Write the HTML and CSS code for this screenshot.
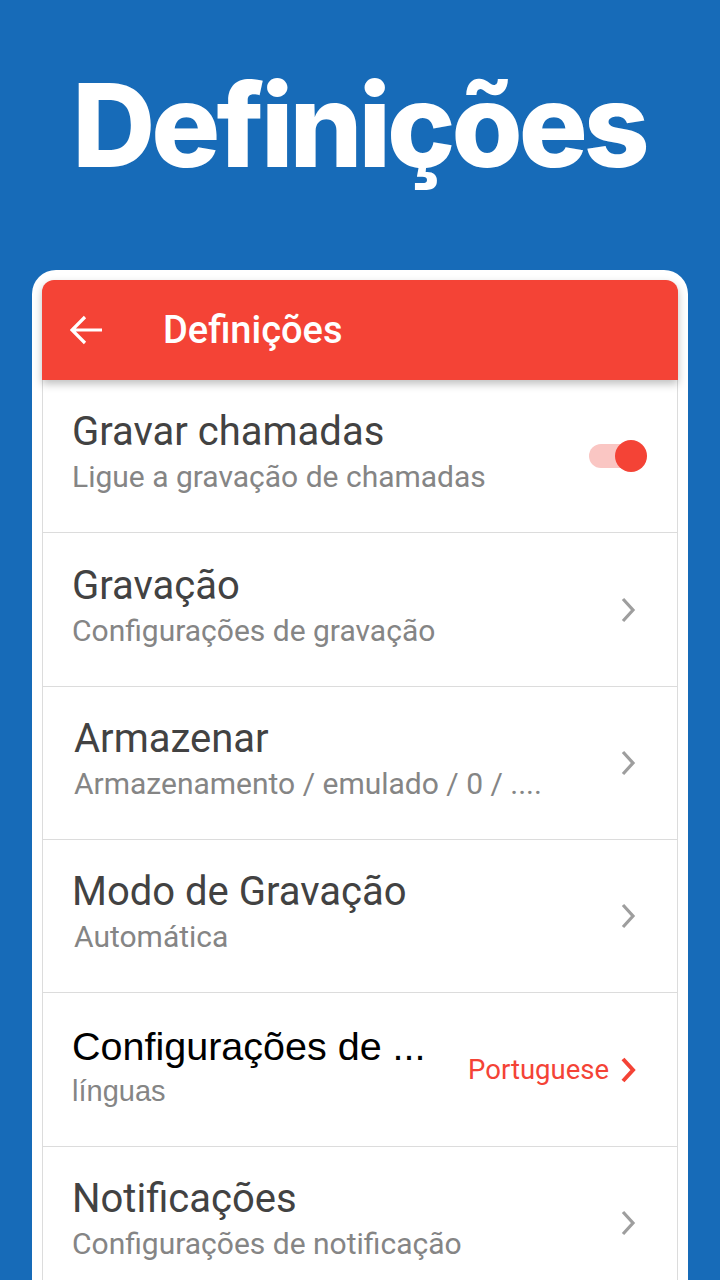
FILE: index.html
```html
<!DOCTYPE html>
<html lang="pt">
<head>
  <meta charset="UTF-8">
  <meta name="viewport" content="width=device-width, initial-scale=1.0">
  <title>Definições</title>
  <link rel="stylesheet" href="styles.css">
</head>
<body>
  <header class="hero">
    <h1>Definições</h1>
  </header>
  <main class="device">
    <div class="appbar">
      <svg class="back" width="34" height="30" viewBox="0 0 34 30">
        <path d="M2 15 H32 M15 2 L2 15 L15 28" fill="none" stroke="#fff" stroke-width="3.2"/>
      </svg>
      <h2>Definições</h2>
    </div>
    <ul class="settings">
      <li class="row">
        <div class="text">
          <p class="title">Gravar chamadas</p>
          <p class="sub">Ligue a gravação de chamadas</p>
        </div>
        <div class="switch"><span class="thumb"></span></div>
      </li>
      <li class="row tall">
        <div class="text">
          <p class="title">Gravação</p>
          <p class="sub">Configurações de gravação</p>
        </div>
        <svg class="chev" width="18" height="28" viewBox="0 0 18 28"><path d="M4 3 L14 14 L4 25" fill="none" stroke="#9e9e9e" stroke-width="3.2"/></svg>
      </li>
      <li class="row">
        <div class="text shift">
          <p class="title">Armazenar</p>
          <p class="sub">Armazenamento / emulado / 0 / ....</p>
        </div>
        <svg class="chev" width="18" height="28" viewBox="0 0 18 28"><path d="M4 3 L14 14 L4 25" fill="none" stroke="#9e9e9e" stroke-width="3.2"/></svg>
      </li>
      <li class="row">
        <div class="text">
          <p class="title">Modo de Gravação</p>
          <p class="sub shift">Automática</p>
        </div>
        <svg class="chev" width="18" height="28" viewBox="0 0 18 28"><path d="M4 3 L14 14 L4 25" fill="none" stroke="#9e9e9e" stroke-width="3.2"/></svg>
      </li>
      <li class="row tall">
        <div class="text">
          <p class="title lang">Configurações de ...</p>
          <p class="sub lang-sub">línguas</p>
        </div>
        <span class="value">Portuguese</span>
        <svg class="chev" width="18" height="28" viewBox="0 0 18 28"><path d="M4 3 L14 14 L4 25" fill="none" stroke="#f44336" stroke-width="4"/></svg>
      </li>
      <li class="row">
        <div class="text">
          <p class="title">Notificações</p>
          <p class="sub">Configurações de notificação</p>
        </div>
        <svg class="chev" width="18" height="28" viewBox="0 0 18 28"><path d="M4 3 L14 14 L4 25" fill="none" stroke="#9e9e9e" stroke-width="3.2"/></svg>
      </li>
    </ul>
  </main>
</body>
</html>
```

FILE: styles.css
```css
body {
  margin: 0;
  width: 720px;
  height: 1280px;
  overflow: hidden;
  background-color: #176bb8;
  font-family: Roboto, "Liberation Sans", sans-serif;
}

.hero {
  height: 270px;
  text-align: center;
}

.hero h1 {
  margin: 0;
  padding-top: 68px;
  padding-right: 2px;
  color: #fff;
  font-family: Inter, Roboto, sans-serif;
  font-size: 115px;
  font-weight: 800;
  line-height: 1;
  letter-spacing: -4px;
}

.device {
  margin: 0 32px;
  height: 1010px;
  box-sizing: border-box;
  border: 10px solid #fff;
  border-bottom: none;
  border-radius: 24px 24px 0 0;
  background-color: #fff;
}

.appbar {
  position: relative;
  z-index: 1;
  display: flex;
  align-items: center;
  height: 100px;
  padding-left: 28px;
  background-color: #f44336;
  border-radius: 12px 12px 0 0;
  box-shadow: 0 4px 8px rgba(0, 0, 0, 0.25);
}

.appbar h2 {
  margin: 0 0 0 59px;
  color: #fff;
  font-size: 38px;
  font-weight: 500;
}

.settings {
  list-style: none;
  margin: 0;
  padding: 0;
  border-left: 1px solid #dcdcdc;
  border-right: 1px solid #dcdcdc;
  height: 910px;
}

.row {
  display: flex;
  align-items: center;
  height: 153px;
  box-sizing: border-box;
  padding: 0 40px 0 29px;
  border-bottom: 1px solid #dcdcdc;
}

.row.tall {
  height: 154px;
}

.text {
  flex: 1;
  padding-bottom: 2px;
}

.title {
  margin: 0;
  color: #424242;
  font-size: 40px;
  line-height: 44px;
}

.sub {
  margin: 0;
  color: #858585;
  font-size: 30px;
  line-height: 46px;
}

.shift {
  padding-left: 2px;
}

.lang {
  color: #000;
  font-family: "Liberation Sans", Arial, sans-serif;
  font-size: 39.5px;
}

.lang-sub {
  font-family: "Liberation Sans", Arial, sans-serif;
  font-size: 29px;
}

.value {
  margin-right: 10px;
  color: #f44336;
  font-size: 27.5px;
}

.chev {
  display: block;
}

.switch {
  position: relative;
  width: 46px;
  height: 24px;
  margin-right: 2px;
  border-radius: 12px;
  background-color: #fac6c3;
}

.thumb {
  position: absolute;
  right: -12px;
  top: -4px;
  width: 32px;
  height: 32px;
  border-radius: 50%;
  background-color: #f44336;
}
```
